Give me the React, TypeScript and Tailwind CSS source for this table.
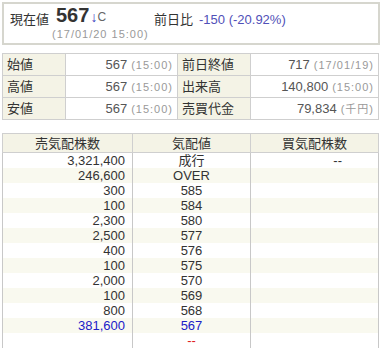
import React from "react";

const font = { fontFamily: '"Liberation Sans", Arial, "Noto Sans CJK JP", sans-serif' };

const board: { sell: string; price: string; buy: string; blue?: boolean; red?: boolean }[] = [
  { sell: "3,321,400", price: "成行", buy: "--" },
  { sell: "246,600", price: "OVER", buy: "" },
  { sell: "300", price: "585", buy: "" },
  { sell: "100", price: "584", buy: "" },
  { sell: "2,300", price: "580", buy: "" },
  { sell: "2,500", price: "577", buy: "" },
  { sell: "400", price: "576", buy: "" },
  { sell: "100", price: "575", buy: "" },
  { sell: "2,000", price: "570", buy: "" },
  { sell: "100", price: "569", buy: "" },
  { sell: "800", price: "568", buy: "" },
  { sell: "381,600", price: "567", buy: "", blue: true },
  { sell: "", price: "--", buy: "", red: true },
];

function Sub({ children }: { children: React.ReactNode }) {
  return <span className="text-[11px] text-[#999] tracking-[1px] ml-[4px]">{children}</span>;
}

export default function App() {
  const rows1 = [
    ["始値", "567", "(15:00)", "前日終値", "717", "(17/01/19)"],
    ["高値", "567", "(15:00)", "出来高", "140,800", "(15:00)"],
    ["安値", "567", "(15:00)", "売買代金", "79,834", "(千円)"],
  ];
  return (
    <div className="w-[384px] h-[350px] overflow-hidden bg-white text-[#333]" style={font}>
      <div className="ml-[2px] mt-[2px] w-[378px] h-[43px] border-2 border-[#d6d6ce] flex">
        <div className="pl-[6px] pt-[6px] text-[13px] w-[48px]">現在値</div>
        <div className="flex flex-col w-[100px]">
          <div className="flex items-end h-[22px] pl-[4px]">
            <span className="text-[20px] font-bold leading-[22px] text-[#333]">567</span>
            <span className="text-[14px] text-[#4040c0] leading-[18px] ml-[1px]">↓</span>
            <span className="text-[12px] text-[#666] leading-[18px]">C</span>
          </div>
          <div className="text-[11px] text-[#999] tracking-[1px] leading-[14px] mt-[1px]">(17/01/20 15:00)</div>
        </div>
        <div className="pt-[6px] text-[13px] flex pl-[2px]">
          <span>前日比</span>
          <span className="ml-[6px] text-[#5050b8]">-150 (-20.92%)</span>
        </div>
      </div>

      <table className="ml-[2px] mt-[8px] w-[377px] border-collapse text-[13px]">
        <tbody>
          {rows1.map((r, i) => (
            <tr key={i} className="h-[22px]">
              <td className="border border-[#cfcfcf] bg-[#f4f3e6] w-[63px] pl-[4px]">{r[0]}</td>
              <td className="border border-[#cfcfcf] w-[112px] text-right pr-[4px] text-[#555]">
                {r[1]}
                <Sub>{r[2]}</Sub>
              </td>
              <td className="border border-[#cfcfcf] bg-[#f4f3e6] w-[73px] pl-[4px]">{r[3]}</td>
              <td className="border border-[#cfcfcf] text-right pr-[4px] text-[#555]">
                {r[4]}
                <Sub>{r[5]}</Sub>
              </td>
            </tr>
          ))}
        </tbody>
      </table>

      <table className="ml-[2px] mt-[13px] w-[377px] border-collapse text-[13px]">
        <thead>
          <tr className="bg-[#f4f3e6]">
            <th className="border border-[#cfcfcf] font-normal w-[130px] h-[19px] p-0 leading-[17px]">売気配株数</th>
            <th className="border border-[#cfcfcf] font-normal w-[118px] h-[19px] p-0 leading-[17px]">気配値</th>
            <th className="border border-[#cfcfcf] font-normal h-[19px] p-0 leading-[17px]">買気配株数</th>
          </tr>
        </thead>
        <tbody>
          {board.map((b, i) => (
            <tr key={i} className={i % 2 === 1 ? "bg-[#f9f9ef]" : "bg-white"}>
              <td className={`border-x border-[#c8c8c8] p-0 h-[15px] leading-[15px] text-right pr-[7px] ${b.blue ? "text-[#2020c8]" : ""}`}>{b.sell}</td>
              <td className={`border-x border-[#c8c8c8] p-0 h-[15px] leading-[15px] text-center ${b.blue ? "text-[#2020c8]" : ""} ${b.red ? "text-[#e02020]" : ""}`}>{b.price}</td>
              <td className="border-x border-[#c8c8c8] p-0 h-[15px] leading-[15px] text-right pr-[36px]">{b.buy}</td>
            </tr>
          ))}
        </tbody>
      </table>
    </div>
  );
}
